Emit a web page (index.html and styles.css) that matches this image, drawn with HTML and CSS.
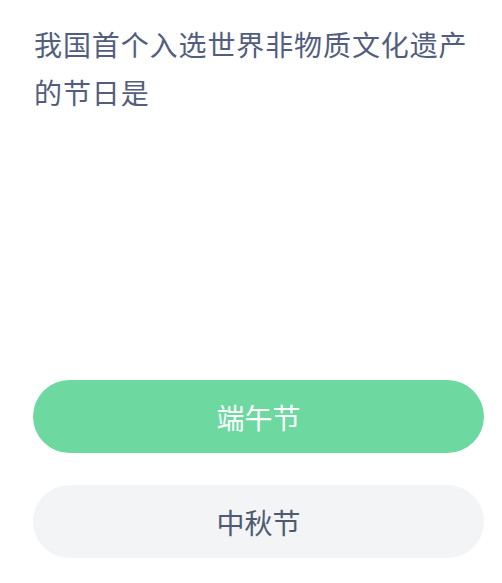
FILE: index.html
```html
<!DOCTYPE html>
<html lang="zh-CN">
<head>
<meta charset="utf-8">
<link rel="stylesheet" href="styles.css">
</head>
<body>
<main class="quiz">
  <h1 class="question">我国首个入选世界非物质文化遗产的节日是</h1>
  <div class="options">
    <button class="option option-selected">端午节</button>
    <button class="option">中秋节</button>
  </div>
</main>
</body>
</html>
```
FILE: styles.css
```css
html, body {
  margin: 0;
  padding: 0;
  background: #ffffff;
}
body {
  font-family: "Noto Sans CJK SC", "Noto Sans", sans-serif;
}
.quiz {
  width: 451px;
  padding: 20px 0 0 33px;
  display: flex;
  flex-direction: column;
}
.question {
  margin: 0 0 264px 0;
  padding-left: 1px;
  font-size: 28px;
  font-weight: 400;
  line-height: 48px;
  letter-spacing: 0.9px;
  color: #535e7e;
}
.options {
  display: flex;
  flex-direction: column;
  gap: 32px;
}
.option {
  height: 73px;
  border: none;
  border-radius: 37px;
  background: #f3f4f6;
  color: #4f5a72;
  font-family: "Noto Sans CJK SC", "Noto Sans", sans-serif;
  font-size: 28px;
  font-weight: 400;
  padding: 0;
  display: flex;
  align-items: center;
  justify-content: center;
}
.option-selected {
  background: #6dd8a0;
  color: #ffffff;
}
```
